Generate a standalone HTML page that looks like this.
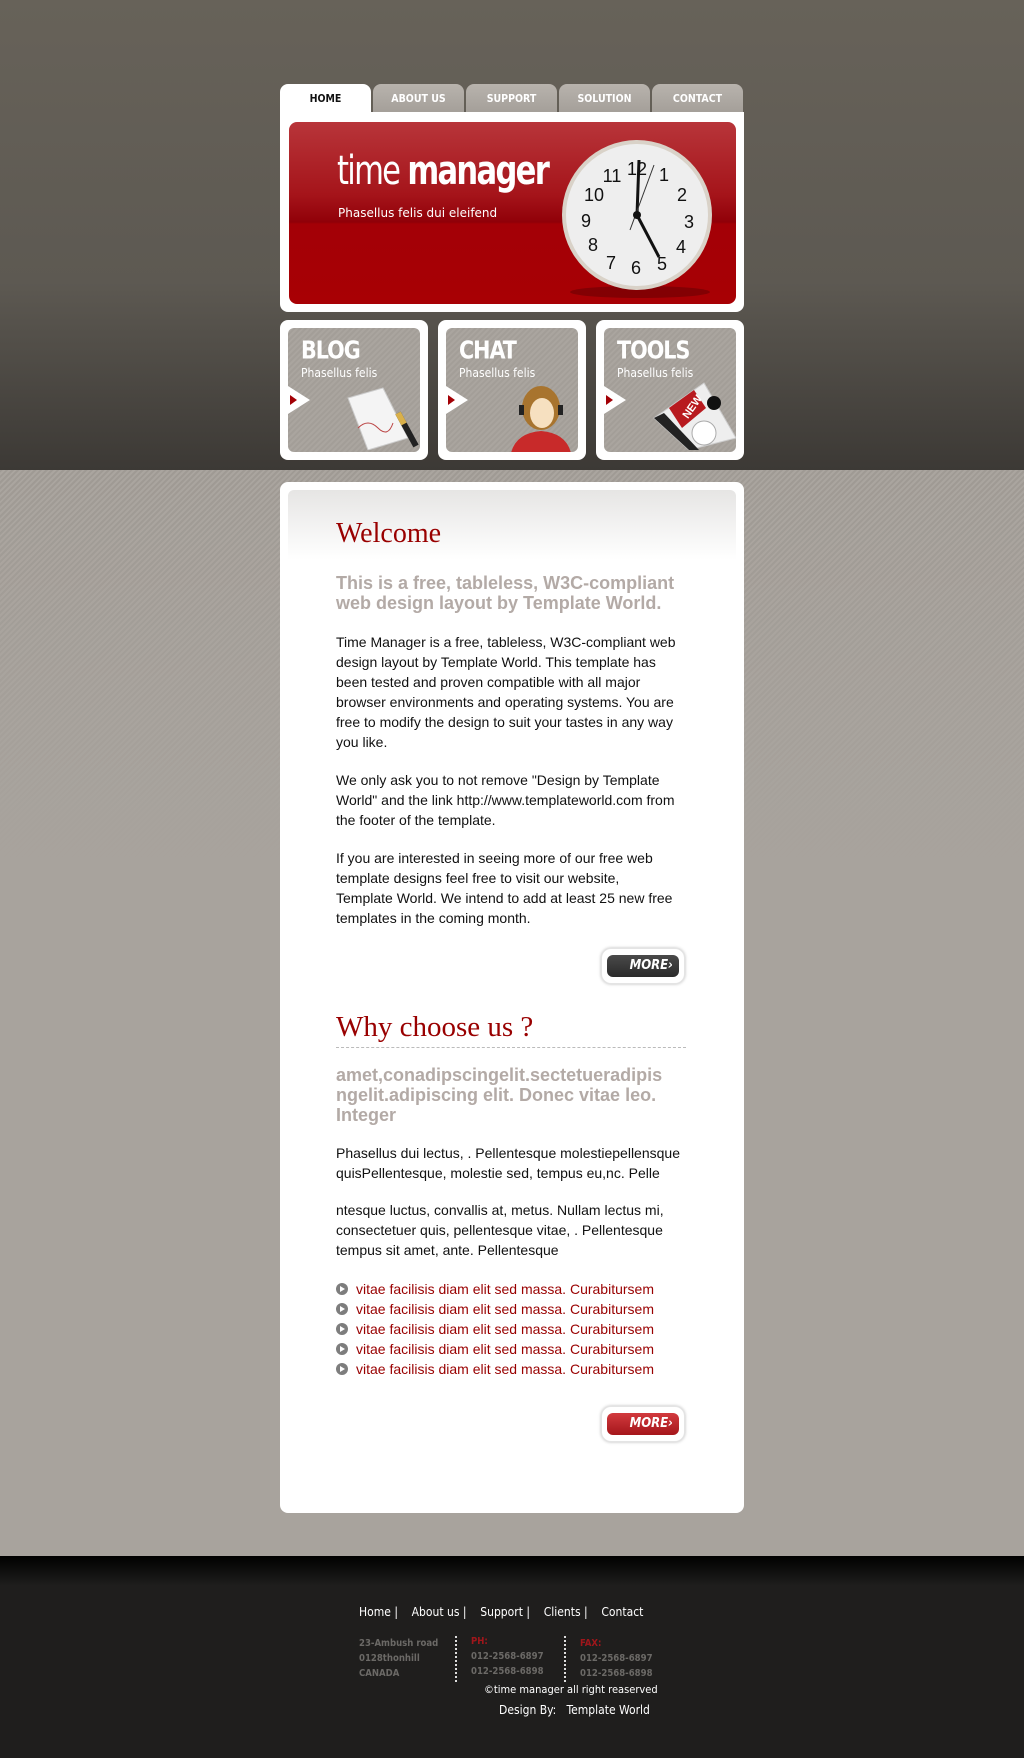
<!DOCTYPE html>
<html><head><meta charset="utf-8"><style>
*{margin:0;padding:0;box-sizing:border-box}
body{width:1024px;height:1758px;overflow:hidden;font-family:"Liberation Sans",Arial,sans-serif;background:#a8a39d;position:relative}
.top{position:absolute;left:0;top:0;width:1024px;height:470px;background:linear-gradient(#676259 0%,#5d5952 60%,#3c3935 100%)}
.mid{position:absolute;left:0;top:470px;width:1024px;height:1086px;background:repeating-linear-gradient(135deg,#9f9a94 0 2px,#aaa59f 2px 4px);}
.mid:after{content:"";position:absolute;inset:0;background:linear-gradient(rgba(168,163,157,0) 0,rgba(168,163,157,1) 400px)}
.foot{position:absolute;left:0;top:1556px;width:1024px;height:202px;background:linear-gradient(#000 0,#1f1e1d 30px,#1f1e1d 100%)}
.tab{position:absolute;top:84px;height:30px;width:91px;border-radius:8px 8px 0 0;background:linear-gradient(#b8b3ad,#a39e98);color:#fff;font:bold 10.5px "DejaVu Sans Condensed",sans-serif;text-align:center;line-height:30px}
.tab.on{background:#fff;color:#111}
.hdr{position:absolute;left:280px;top:112px;width:464px;height:200px;background:#fff;border-radius:0 0 8px 8px}
.ban{position:absolute;left:289px;top:122px;width:447px;height:182px;border-radius:8px;background:linear-gradient(#b8353a 0,#a5141a 40%,#900008 55%,#a30006 56%,#a80004 100%);overflow:hidden}
.box{position:absolute;top:320px;width:148px;height:140px;background:#fff;border-radius:8px}
.box .in{position:absolute;left:8px;top:8px;right:8px;bottom:8px;border-radius:6px;background:repeating-linear-gradient(135deg,#a39e98 0 2px,#aaa59f 2px 4px);overflow:hidden}
.box h3{position:absolute;left:13px;top:10px;color:#fff;font:bold 23px "DejaVu Sans Condensed","Liberation Sans Narrow",sans-serif;letter-spacing:-1px;transform:scaleY(1.1)}
.box p{position:absolute;left:13px;top:38px;color:#fff;font:12px "DejaVu Sans Condensed",sans-serif}
.box .ar{position:absolute;left:0;top:58px;width:0;height:0;border-top:14px solid transparent;border-bottom:14px solid transparent;border-left:22px solid #fff}
.box .ar:after{content:"";position:absolute;left:-20px;top:-5px;border-top:5px solid transparent;border-bottom:5px solid transparent;border-left:7px solid #a30006}
.main{position:absolute;left:280px;top:482px;width:464px;height:1031px;background:#fff;border-radius:8px}
.grad{position:absolute;left:8px;top:8px;width:448px;height:70px;border-radius:6px 6px 0 0;background:linear-gradient(#e6e5e4,#fff)}
.c{position:absolute;left:336px;width:348px}
h1{font:28px "Liberation Serif",Georgia,serif;color:#990000;position:absolute}
h2{font:bold 18px/20px "Liberation Sans",Arial,sans-serif;color:#b3aaa6}
.t{font:14px/20px "Liberation Sans",Arial,sans-serif;color:#111}
.li{font:14px/20px "Liberation Sans",Arial,sans-serif;color:#990000;padding-left:20px;position:relative}
.li:before{content:"";position:absolute;left:0;top:4px;width:12px;height:12px;border-radius:50%;background:#7d7d7d}
.li:after{content:"";position:absolute;left:4px;top:7px;border-top:3px solid transparent;border-bottom:3px solid transparent;border-left:5px solid #fff}
.more{position:absolute;left:601px;width:84px;height:36px;border-radius:10px;background:#fff;box-shadow:0 0 3px #bbb;border:1px solid #e4e4e4}
.more span{position:absolute;left:5px;top:6px;width:72px;height:22px;border-radius:6px;color:#fff;font:bold 13px "DejaVu Sans Condensed",sans-serif;line-height:22px;text-align:right;padding-right:6px;font-style:italic}
.fn{position:absolute;top:1605px;left:359px;color:#fff;font:12px "DejaVu Sans Condensed","DejaVu Sans",sans-serif;white-space:pre}
.fa{position:absolute;font:bold 9.5px/15px "DejaVu Sans Condensed",sans-serif;color:#6b6966}
.fa b{color:#a0161b}
.dv{position:absolute;top:1636px;height:46px;border-left:2px dotted #ddd}
</style></head><body>
<div class="top"></div><div class="mid"></div><div class="foot"></div>

<div class="tab on" style="left:280px">HOME</div>
<div class="tab" style="left:373px">ABOUT US</div>
<div class="tab" style="left:466px">SUPPORT</div>
<div class="tab" style="left:559px">SOLUTION</div>
<div class="tab" style="left:652px">CONTACT</div>
<div class="hdr"></div>
<div class="ban">
 <div style="position:absolute;left:48px;top:26px;color:#fff;font:40px 'DejaVu Sans Condensed',sans-serif;letter-spacing:-2px;transform:scaleX(.85);transform-origin:left">time <b style="font-weight:bold">manager</b></div>
 <div style="position:absolute;left:49px;top:84px;color:#fff;font:12px 'DejaVu Sans',sans-serif">Phasellus felis dui eleifend</div>
 <svg style="position:absolute;left:0;top:0" width="447" height="182" viewBox="289 122 447 182">
  <ellipse cx="640" cy="292" rx="70" ry="6" fill="#6a0004" opacity=".6"/>
  <circle cx="637" cy="215" r="75" fill="#d9d2c8"/>
  <circle cx="637" cy="215" r="71" fill="#eeeeee"/>
  <g font-family="Liberation Sans,sans-serif" font-size="18" fill="#111" text-anchor="middle">
   <text x="637" y="175">12</text><text x="664" y="181">1</text><text x="682" y="201">2</text><text x="689" y="228">3</text><text x="681" y="253">4</text><text x="662" y="270">5</text><text x="636" y="274">6</text><text x="611" y="269">7</text><text x="593" y="251">8</text><text x="586" y="227">9</text><text x="594" y="201">10</text><text x="612" y="182">11</text>
  </g>
  <line x1="637" y1="215" x2="639" y2="160" stroke="#111" stroke-width="3"/>
  <line x1="637" y1="215" x2="659" y2="257" stroke="#111" stroke-width="3"/>
  <line x1="630" y1="230" x2="654" y2="165" stroke="#333" stroke-width="1"/>
  <circle cx="637" cy="215" r="4" fill="#111"/>
 </svg>
</div>

<div class="box" style="left:280px"><div class="in"><h3>BLOG</h3><p>Phasellus felis</p><div class="ar"></div>
 <svg style="position:absolute;left:40px;top:50px" width="92" height="72"><polygon points="20,20 55,10 80,60 40,72" fill="#f4f4f4" stroke="#ccc"/><path d="M30 50 q10 -10 20 0 t15 -5" stroke="#b44" fill="none"/><line x1="70" y1="35" x2="88" y2="68" stroke="#222" stroke-width="6"/><line x1="70" y1="35" x2="76" y2="46" stroke="#d9b04a" stroke-width="6"/></svg></div></div>
<div class="box" style="left:438px"><div class="in"><h3>CHAT</h3><p>Phasellus felis</p><div class="ar"></div>
 <svg style="position:absolute;left:55px;top:55px" width="80" height="70"><path d="M10 70 q5 -20 30 -22 q25 2 30 22z" fill="#c82a2a"/><ellipse cx="40" cy="25" rx="19" ry="22" fill="#a8742e"/><ellipse cx="41" cy="30" rx="12" ry="15" fill="#f6e0c0"/><rect x="18" y="22" width="5" height="10" fill="#222"/><rect x="57" y="22" width="5" height="10" fill="#222"/></svg></div></div>
<div class="box" style="left:596px"><div class="in"><h3>TOOLS</h3><p>Phasellus felis</p><div class="ar"></div>
 <svg style="position:absolute;left:40px;top:50px" width="92" height="72"><polygon points="10,40 60,5 92,60 45,72" fill="#eee" stroke="#ccc"/><polygon points="10,40 20,35 55,72 45,72" fill="#222"/><polygon points="25,30 50,12 62,30 38,50" fill="#b81a1f"/><text x="38" y="38" fill="#fff" font-size="11" font-weight="bold" transform="rotate(-55 44 34)" font-family="Liberation Sans">NEW</text><circle cx="70" cy="25" r="7" fill="#111"/><circle cx="60" cy="55" r="12" fill="#fff" stroke="#aaa"/></svg></div></div>

<div class="main"><div class="grad"></div></div>
<h1 style="left:336px;top:518px">Welcome</h1>
<div class="c" style="top:573px"><h2>This is a free, tableless, W3C-compliant web design layout by Template World.</h2></div>
<div class="c t" style="top:632px">Time Manager is a free, tableless, W3C-compliant web design layout by Template World. This template has been tested and proven compatible with all major browser environments and operating systems. You are free to modify the design to suit your tastes in any way you like.</div>
<div class="c t" style="top:770px">We only ask you to not remove "Design by Template World" and the link http://www.templateworld.com from the footer of the template.</div>
<div class="c t" style="top:848px">If you are interested in seeing more of our free web template designs feel free to visit our website,<br>Template World. We intend to add at least 25 new free templates in the coming month.</div>
<div class="more" style="top:948px"><span style="background:linear-gradient(#4a4a4a,#2a2a2a)">MORE&#8250;</span></div>

<h1 style="left:336px;top:1011px;font-size:29px">Why choose us ?</h1>
<div style="position:absolute;left:336px;top:1047px;width:350px;border-top:1px dashed #bbb"></div>
<div class="c" style="top:1065px"><h2>amet,conadipscingelit.sectetueradipis ngelit.adipiscing elit. Donec vitae leo. Integer</h2></div>
<div class="c t" style="top:1143px;width:352px">Phasellus dui lectus, . Pellentesque molestiepellensque quisPellentesque, molestie sed, tempus eu,nc. Pelle</div>
<div class="c t" style="top:1200px">ntesque luctus, convallis at, metus. Nullam lectus mi, consectetuer quis, pellentesque vitae, . Pellentesque tempus sit amet, ante. Pellentesque</div>
<div class="c" style="top:1279px"><div class="li">vitae facilisis diam elit sed massa. Curabitursem</div><div class="li">vitae facilisis diam elit sed massa. Curabitursem</div><div class="li">vitae facilisis diam elit sed massa. Curabitursem</div><div class="li">vitae facilisis diam elit sed massa. Curabitursem</div><div class="li">vitae facilisis diam elit sed massa. Curabitursem</div></div>
<div class="more" style="top:1406px"><span style="background:linear-gradient(#d23a3e,#a5161b)">MORE&#8250;</span></div>

<div class="fn">Home |    About us |    Support |    Clients |    Contact</div>
<div class="fa" style="left:359px;top:1636px">23-Ambush road<br>0128thonhill<br>CANADA</div>
<div class="dv" style="left:455px"></div>
<div class="fa" style="left:471px;top:1634px"><b>PH:</b><br>012-2568-6897<br>012-2568-6898</div>
<div class="dv" style="left:564px"></div>
<div class="fa" style="left:580px;top:1636px"><b>FAX:</b><br>012-2568-6897<br>012-2568-6898</div>
<div style="position:absolute;left:484px;top:1683px;color:#fff;font:11px 'DejaVu Sans Condensed',sans-serif">©time manager all right reaserved</div>
<div style="position:absolute;left:499px;top:1703px;color:#fff;font:12px 'DejaVu Sans Condensed',sans-serif;white-space:pre">Design By:   Template World</div>
</body></html>
